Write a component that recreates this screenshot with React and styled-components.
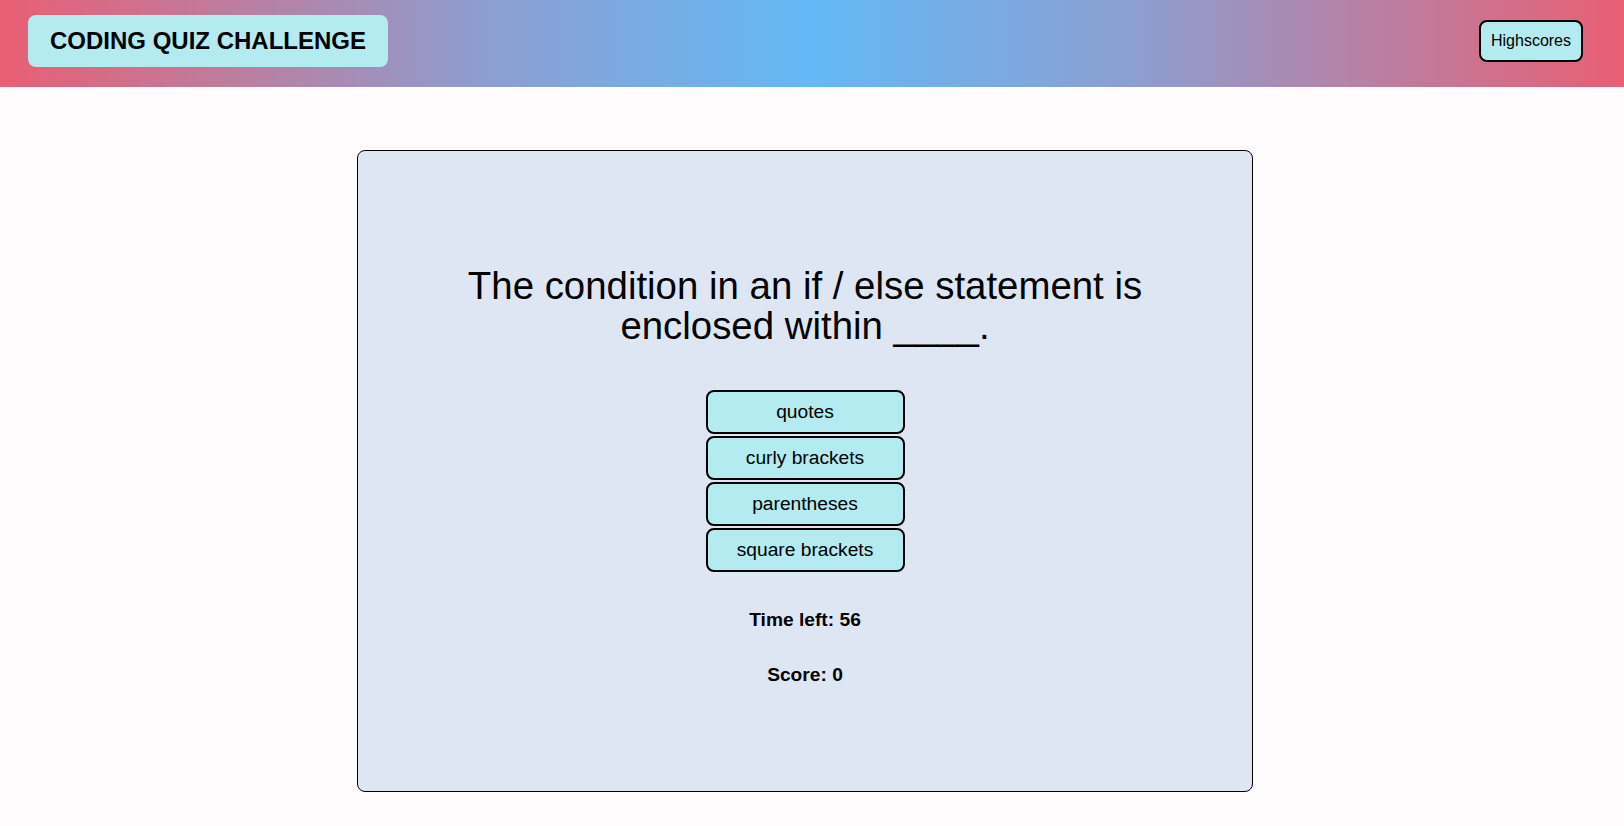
import React from "react";
import styled, { createGlobalStyle } from "styled-components";

const Global = createGlobalStyle`
  html, body { margin: 0; padding: 0; }
  body {
    background: #fffcfd;
    font-family: "Liberation Sans", Arial, Helvetica, sans-serif;
    color: #000;
  }
`;

const Header = styled.header`
  height: 87px;
  display: flex;
  align-items: center;
  justify-content: space-between;
  padding: 0 41px 0 28px;
  box-sizing: border-box;
  background: linear-gradient(90deg, #e95f73 0%, #8c9ed0 30%, #63b9f6 50%, #8c9ed0 70%, #e95f73 100%);
`;

const Title = styled.h1`
  margin: 0;
  margin-top: -6px;
  width: 360px;
  height: 52px;
  box-sizing: border-box;
  display: flex;
  align-items: center;
  justify-content: center;
  background: #b3ebf0;
  border-radius: 8px;
  font-size: 24px;
  font-weight: 700;
`;

const HighscoreButton = styled.button`
  width: 104px;
  height: 42px;
  margin-top: -6px;
  background: #b3ebf0;
  border: 2px solid #000;
  border-radius: 8px;
  font-family: inherit;
  font-size: 16px;
  color: #000;
  padding: 0;
`;

const Main = styled.main`
  padding: 63px 371px 0 357px;
`;

const Card = styled.section`
  height: 642px;
  box-sizing: border-box;
  background: #dfe6f3;
  border: 1px solid #000;
  border-radius: 8px;
  display: flex;
  flex-direction: column;
  align-items: center;
  padding-top: 115px;
`;

const Question = styled.h2`
  margin: 0;
  width: 720px;
  text-align: center;
  font-size: 38.4px;
  font-weight: 400;
  line-height: 39.5px;
`;

const Choices = styled.div`
  margin-top: 45px;
  display: flex;
  flex-direction: column;
  gap: 2px;
`;

const Choice = styled.button`
  width: 199px;
  height: 44px;
  background: #b3ebf0;
  border: 2px solid #000;
  border-radius: 8px;
  font-family: inherit;
  font-size: 19.2px;
  color: #000;
  padding: 0;
`;

const Stat = styled.p`
  margin: ${(p) => p.$top}px 0 0;
  font-size: 19.2px;
  font-weight: 700;
  line-height: 22px;
`;

const choices = ["quotes", "curly brackets", "parentheses", "square brackets"];

export default function App() {
  return (
    <>
      <Global />
      <Header>
        <Title>CODING QUIZ CHALLENGE</Title>
        <HighscoreButton>Highscores</HighscoreButton>
      </Header>
      <Main>
        <Card>
          <Question>The condition in an if / else statement is enclosed within ____.</Question>
          <Choices>
            {choices.map((c) => (
              <Choice key={c}>{c}</Choice>
            ))}
          </Choices>
          <Stat $top={37}>Time left: 56</Stat>
          <Stat $top={33}>Score: 0</Stat>
        </Card>
      </Main>
    </>
  );
}
